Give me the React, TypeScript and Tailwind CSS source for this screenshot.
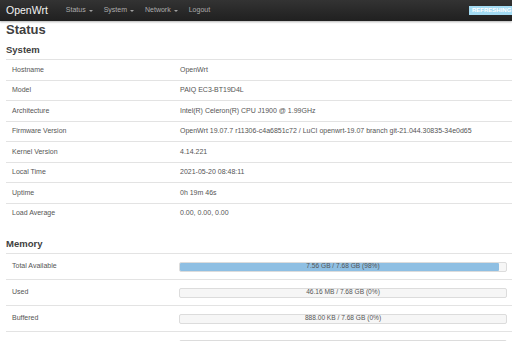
import * as React from "react"

const systemRows = [
  ["Hostname", "OpenWrt"],
  ["Model", "PAIQ EC3-BT19D4L"],
  ["Architecture", "Intel(R) Celeron(R) CPU J1900 @ 1.99GHz"],
  ["Firmware Version", "OpenWrt 19.07.7 r11306-c4a6851c72 / LuCI openwrt-19.07 branch git-21.044.30835-34e0d65"],
  ["Kernel Version", "4.14.221"],
  ["Local Time", "2021-05-20 08:48:11"],
  ["Uptime", "0h 19m 46s"],
  ["Load Average", "0.00, 0.00, 0.00"],
]

// last row only peeks in at the bottom edge, its texts lie below the fold
const memoryRows = [
  { label: "Total Available", text: "7.56 GB / 7.68 GB (98%)", pct: 98 },
  { label: "Used", text: "46.16 MB / 7.68 GB (0%)", pct: 0 },
  { label: "Buffered", text: "888.00 KB / 7.68 GB (0%)", pct: 0 },
  { label: "", text: "", pct: 0 },
]

function Caret() {
  return (
    <span className="ml-[3px] inline-block h-0 w-0 border-x-[2px] border-t-[2px] border-x-transparent border-t-[#a0a0a0] align-middle" />
  )
}

function NavItem({ label, caret = true, first = false }: { label: string; caret?: boolean; first?: boolean }) {
  return (
    <span className={`flex items-center text-[7px] text-[#adadad] ${first ? "ml-[18px]" : "ml-[11px]"}`}>
      {label}
      {caret && <Caret />}
    </span>
  )
}

function Bar({ text, pct }: { text: string; pct: number }) {
  return (
    <div className="relative -ml-[1px] h-[10px] rounded-[2px] border border-[#dcdcdc] bg-[#f6f6f6]">
      <div className="h-full rounded-[1px] bg-[#8ebfe3]" style={{ width: `${pct}%` }} />
      <div className="absolute inset-0 flex items-center justify-center text-[6.6px] leading-none text-[#555]">
        {text}
      </div>
    </div>
  )
}

export default function App() {
  return (
    <div className="h-[341px] w-[512px] overflow-hidden bg-white font-['Liberation_Sans',Arial,sans-serif]">
      {/* Navbar */}
      <div className="relative z-10 flex h-[21px] items-center overflow-hidden bg-linear-to-b from-[#333333] to-[#202020] pl-[6px] shadow-[0_1px_2px_rgba(0,0,0,0.3)]">
        <span className="text-[10.5px] leading-none text-[#f2f2f2]">OpenWrt</span>
        <NavItem label="Status" first />
        <NavItem label="System" />
        <NavItem label="Network" />
        <NavItem label="Logout" caret={false} />
        <span className="ml-auto flex h-[9px] w-[43px] shrink-0 items-center bg-[#a3dbf3] pl-[3px] text-[6px] font-bold text-white">
          REFRESHING
        </span>
      </div>

      <div className="pl-[6px]">
        <h2 className="mt-[1px] text-[13px] font-bold leading-[16px] text-[#404040]">Status</h2>

        <h3 className="mt-[6px] text-[9.5px] font-bold leading-[12px] text-[#404040]">System</h3>
        <div className="mt-[3px]">
          {systemRows.map(([label, value]) => (
            <div key={label} className="flex h-[20.5px] items-center border-t border-[#e3e3e3] text-[7px] text-[#555]">
              <div className="w-[168px] shrink-0 pl-[6px]">{label}</div>
              <div className="whitespace-nowrap pl-[6px]">{value}</div>
            </div>
          ))}
        </div>

        <h3 className="mt-[15px] text-[9.5px] font-bold leading-[12px] text-[#404040]">Memory</h3>
        <div className="mt-[3px]">
          {memoryRows.map((row, i) => (
            <div key={i} className="flex h-[26px] items-center border-t border-[#e3e3e3] text-[7px] text-[#555]">
              <div className="w-[168px] shrink-0 pl-[6px]">{row.label}</div>
              <div className="flex-1 pl-[6px] pr-[5px]">
                <Bar text={row.text} pct={row.pct} />
              </div>
            </div>
          ))}
        </div>
      </div>
    </div>
  )
}
